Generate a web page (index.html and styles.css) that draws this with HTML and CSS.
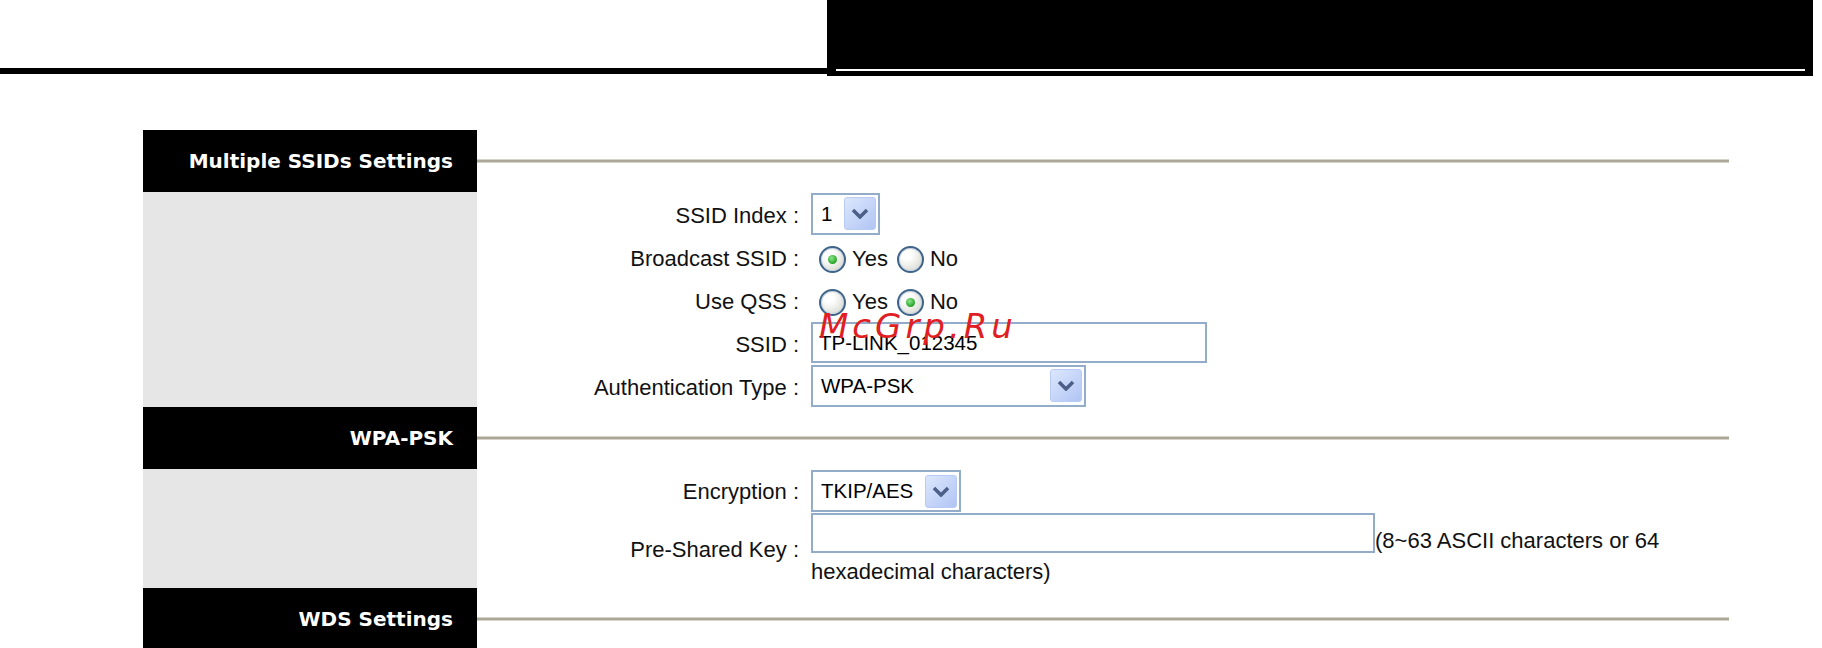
FILE: index.html
```html
<!doctype html>
<html lang="en">
<head>
    <meta charset="UTF-8">
    <title>Wireless Settings</title>
    <link rel="stylesheet" href="styles.css">
</head>
<body>
    <div class="topbar">
        <div class="topbar-rule"></div>
        <div class="topbar-box"><div class="topbar-line"></div></div>
    </div>

    <div class="settings">
        <!-- Multiple SSIDs -->
        <div class="sec-head"><h2>Multiple SSIDs Settings</h2><span class="sec-rule"></span></div>
        <div class="sec-body">
            <div class="row">
                <label>SSID Index :</label>
                <div class="ctl">
                    <div class="select sel-index"><span>1</span><i class="arrow"><svg width="18" height="11" viewBox="0 0 18 11"><path d="M2 2l7 7 7-7" fill="none" stroke="#4b5f88" stroke-width="3.5"/></svg></i></div>
                </div>
            </div>
            <div class="row">
                <label>Broadcast SSID :</label>
                <div class="ctl radios">
                    <span class="opt"><i class="radio on"></i>Yes</span>
                    <span class="opt"><i class="radio"></i>No</span>
                </div>
            </div>
            <div class="row">
                <label>Use QSS :</label>
                <div class="ctl radios">
                    <span class="opt"><i class="radio"></i>Yes</span>
                    <span class="opt"><i class="radio on"></i>No</span>
                </div>
            </div>
            <div class="row">
                <label>SSID :</label>
                <div class="ctl"><input class="textbox ssid" type="text" value="TP-LINK_012345"></div>
            </div>
            <div class="row">
                <label>Authentication Type :</label>
                <div class="ctl">
                    <div class="select sel-auth"><span>WPA-PSK</span><i class="arrow"><svg width="18" height="11" viewBox="0 0 18 11"><path d="M2 2l7 7 7-7" fill="none" stroke="#4b5f88" stroke-width="3.5"/></svg></i></div>
                </div>
            </div>
        </div>

        <!-- WPA-PSK -->
        <div class="sec-head"><h2>WPA-PSK</h2><span class="sec-rule"></span></div>
        <div class="sec-body">
            <div class="row row-enc">
                <label>Encryption :</label>
                <div class="ctl">
                    <div class="select sel-enc"><span>TKIP/AES</span><i class="arrow"><svg width="18" height="11" viewBox="0 0 18 11"><path d="M2 2l7 7 7-7" fill="none" stroke="#4b5f88" stroke-width="3.5"/></svg></i></div>
                </div>
            </div>
            <div class="row row-key">
                <label>Pre-Shared Key :</label>
                <div class="ctl key-cell"><input class="textbox key" type="text">(8~63 ASCII characters or 64 hexadecimal characters)</div>
            </div>
        </div>

        <!-- WDS -->
        <div class="sec-head"><h2>WDS Settings</h2><span class="sec-rule"></span></div>
    </div>

    <div class="watermark">McGrp.Ru</div>
</body>
</html>
```

FILE: styles.css
```css
body{margin:0; background:#fff; color:#111; font-family:"Liberation Sans", Arial, sans-serif; font-size:22px;}

/* top bar */
.topbar{display:flex; align-items:flex-start; height:76px;}
.topbar-rule{width:827px; height:6px; margin-top:68px; background:#000;}
.topbar-box{width:986px; height:76px; box-sizing:border-box; padding:0 8px 5px 9px; background:#000; display:flex; align-items:flex-end;}
.topbar-line{flex:1; height:2px; background:#fff;}

/* sections */
.settings{width:1586px; margin:54px 0 0 143px;}
.sec-head{display:flex; align-items:center; height:62px;}
.sec-head h2{margin:0; width:334px; height:100%; box-sizing:border-box; padding-right:24px;
    background:#000; color:#fff; text-align:right;
    font:bold 20px/62px "DejaVu Sans", Verdana, sans-serif;}
.sec-rule{flex:1; height:2px; background:#aca899; border-top:1px solid #d6d3c9; border-bottom:1px solid #d6d3c9;}
.sec-body{padding-left:334px; background:linear-gradient(90deg, #e6e6e6 334px, #fff 334px);}

.row{display:grid; grid-template-columns:322px 1fr; column-gap:12px; align-items:center; height:43px;}
.row label{text-align:right; white-space:nowrap; padding-top:4px;}
.row-enc{height:44px;}
.row-enc label{padding-top:2px;}
.row-key{height:auto;}
.row-key label{padding-top:0;}

/* select boxes */
.select{display:inline-flex; align-items:center; justify-content:space-between; box-sizing:border-box;
    height:42px; padding:0 2px 0 8px; border:2px solid #93acc9; background:#fff;
    color:#000; font-size:20.5px; vertical-align:middle;}
.sel-index{width:69px;}
.sel-auth{width:275px;}
.sel-enc{width:150px;}
.arrow{width:32px; height:33px; box-sizing:border-box; border:1px solid #b8cbf4; border-radius:3px;
    background:linear-gradient(135deg, #dce7fd, #b1c5f4); display:flex; align-items:center; justify-content:center;}

/* radios */
.radios{display:flex; align-items:center; padding-top:5px;}
.opt{display:flex; align-items:center; margin-left:8px;}
.opt + .opt{margin-left:9px;}
.radio{width:27px; height:27px; box-sizing:border-box; margin:0 6px 0 0; border-radius:50%;
    border:2px solid #3f6489; box-shadow:inset 0 0 0 1px #c9d5e2;
    background:radial-gradient(circle at 35% 30%, #fff 20%, #dcdcd4 80%);
    display:flex; align-items:center; justify-content:center; flex:none;}
.radio.on::after{content:''; width:9px; height:9px; border-radius:50%;
    background:radial-gradient(circle at 40% 35%, #8be88b, #1e9e1e 75%);}

/* text inputs */
.textbox{box-sizing:border-box; margin:0; padding:0 6px; border:2px solid #93acc9; background:#fff;
    color:#000; font:20.5px "Liberation Sans", Arial, sans-serif; outline:none;}
.ssid{width:396px; height:41px;}
.key-cell{line-height:1.4;}
.key{width:564px; height:40px; vertical-align:8px;}

.watermark{position:absolute; left:819px; top:309px; color:#e01e24;
    font:italic 34px/1 "DejaVu Sans", sans-serif; letter-spacing:4px;}
```
